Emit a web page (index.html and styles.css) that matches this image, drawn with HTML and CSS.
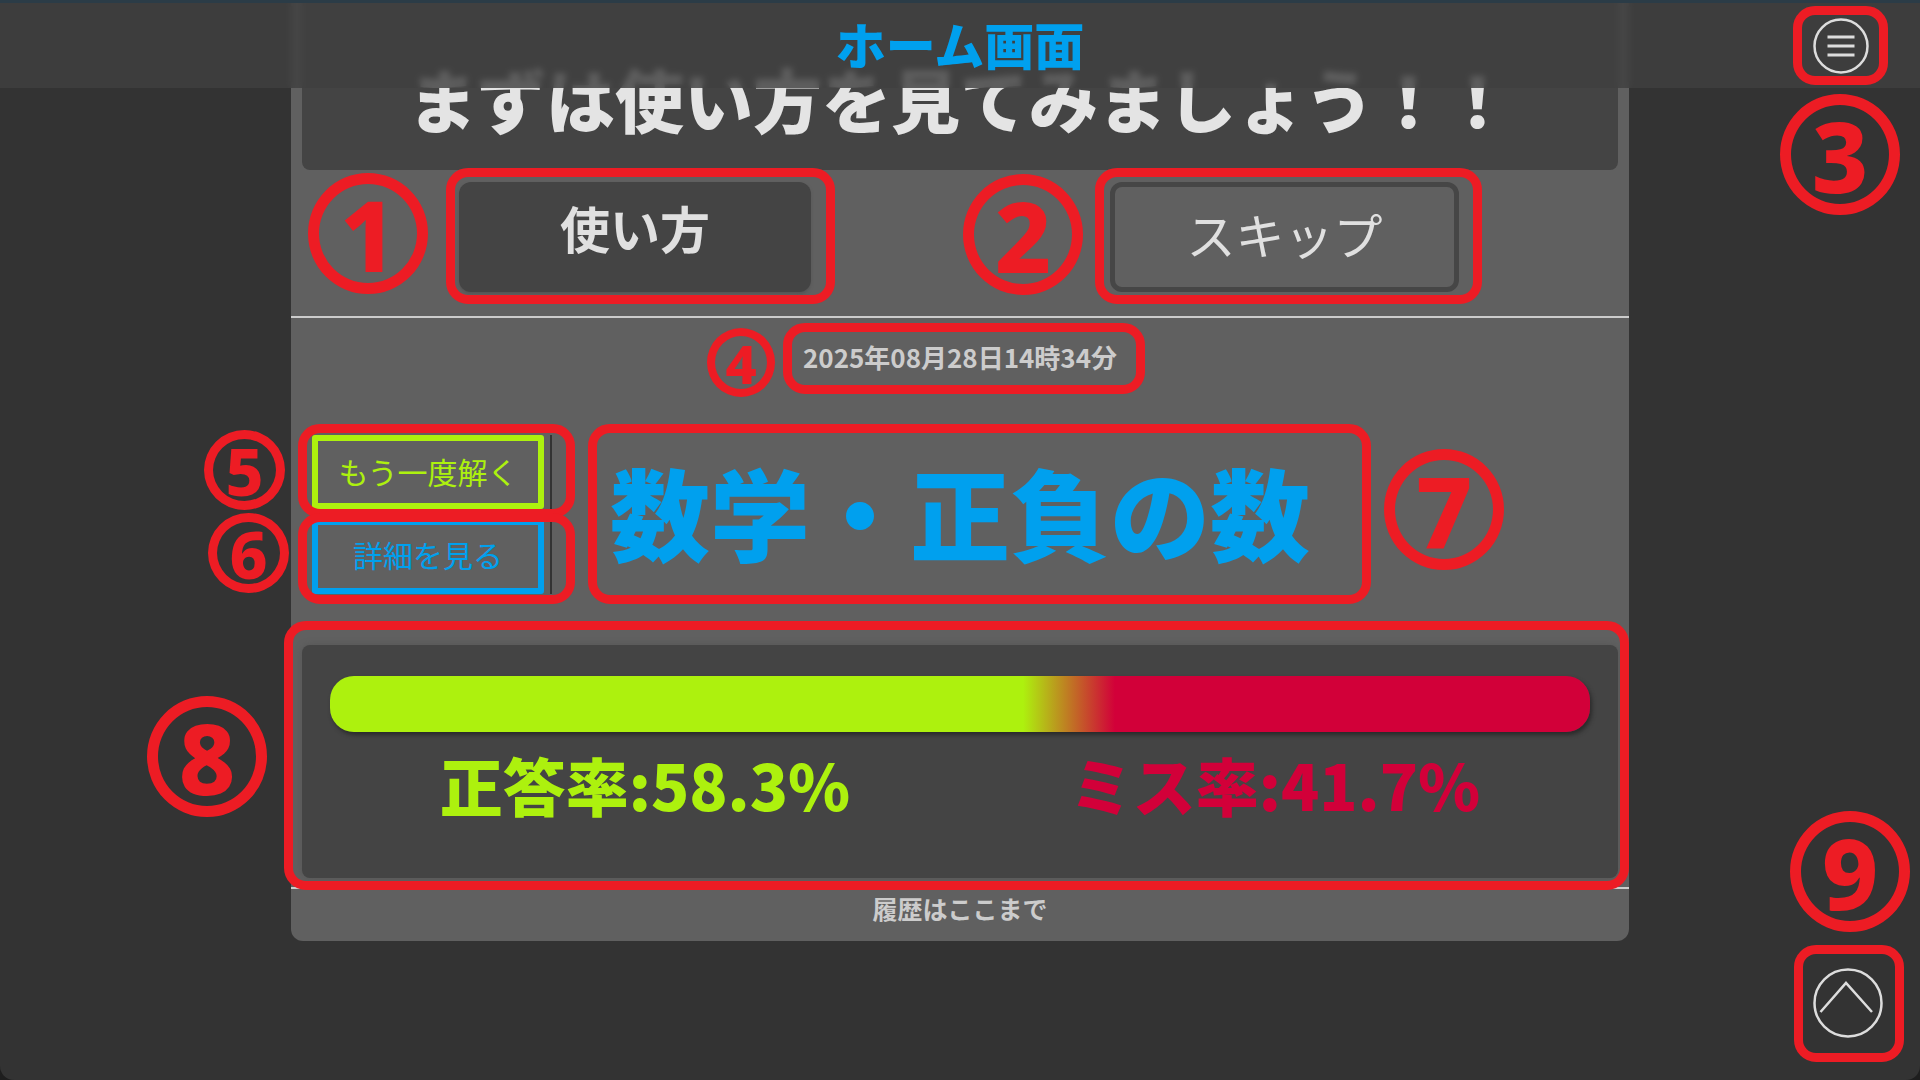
FILE: index.html
```html
<!DOCTYPE html>
<html lang="ja">
<head>
<meta charset="UTF-8">
<title>ホーム画面</title>
<link rel="stylesheet" href="styles.css">
</head>
<body>
<header class="top">
    <h1 class="top-title">ホーム画面</h1>
    <a class="menu-btn" href="javascript:;">
        <svg width="56" height="56" viewBox="0 0 56 56" fill="none" stroke="#ddd">
            <circle cx="28" cy="28" r="26.5" stroke-width="2.5"/>
            <path d="M14.5 19H41.5M14.5 28H41.5M14.5 37H41.5" stroke-width="3"/>
        </svg>
    </a>
</header>

<main class="card">
    <div class="intro">まずは使い方を見てみましょう！！</div>
    <div class="choice">
        <a class="btn btn-dark" href="javascript:;">使い方</a>
        <a class="btn btn-line" href="javascript:;">スキップ</a>
    </div>
    <div class="rule"></div>
    <div class="date">2025年08月28日14時34分</div>
    <div class="history">
        <div class="side">
            <a class="side-btn side-green" href="javascript:;">もう一度解く</a>
            <a class="side-btn side-blue" href="javascript:;">詳細を見る</a>
        </div>
        <div class="subject">数学・正負の数</div>
    </div>
    <div class="rate">
        <div class="rate-bar"></div>
        <div class="rate-text">
            <span class="rate-ok">正答率:58.3%</span>
            <span class="rate-ng">ミス率:41.7%</span>
        </div>
    </div>
    <div class="rule rule-end"></div>
    <div class="end">履歴はここまで</div>
</main>

<a class="up-btn" href="javascript:;">
    <svg width="70" height="70" viewBox="0 0 70 70" fill="none" stroke="#ddd" stroke-width="2.5">
        <circle cx="35" cy="35" r="33.5"/>
        <path d="M7.5 44L33 15L59 44"/>
    </svg>
</a>

<!-- 赤い注釈 -->
<div class="mark mark-1"></div>
<div class="mark mark-2"></div>
<div class="mark mark-3"></div>
<div class="mark mark-4"></div>
<div class="mark mark-5"></div>
<div class="mark mark-6"></div>
<div class="mark mark-7"></div>
<div class="mark mark-8"></div>
<div class="mark mark-9"></div>
<div class="num num-1">1</div>
<div class="num num-2">2</div>
<div class="num num-3">3</div>
<div class="num num-small num-4">4</div>
<div class="num num-mid num-5">5</div>
<div class="num num-mid num-6">6</div>
<div class="num num-7">7</div>
<div class="num num-8">8</div>
<div class="num num-9">9</div>
</body>
</html>
```

FILE: styles.css
```css
*{margin:0;padding:0;box-sizing:border-box;}
html{height:1080px;overflow:hidden;background:#1e1e1e;}
body{height:1080px;overflow:hidden;background:#333;border-radius:0 0 14px 14px;color:#e0e0e0;font-family:"Noto Sans CJK JP","Noto Sans",sans-serif;position:relative;}
a{text-decoration:none;color:inherit;}

.top{position:absolute;left:0;top:0;width:100%;height:88px;z-index:2;background:rgba(64,64,64,.82);border-top:3px solid #2b3c47;backdrop-filter:blur(3px);display:flex;justify-content:center;align-items:center;}
.top-title{font-size:50px;line-height:88px;margin-top:-5px;font-weight:900;color:#00a0ee;}
.menu-btn{position:absolute;right:51px;top:15px;display:block;height:56px;}

.card{width:1338px;height:941px;margin:0 auto;background:#606060;border-radius:0 0 12px 12px;}
.intro{height:170px;margin:0 11px;padding-top:54px;background:#444;border-radius:0 0 8px 8px;text-align:center;font-size:69px;line-height:88px;font-weight:900;color:#e4e4e4;}
.choice{display:flex;justify-content:center;gap:299px;padding:12px 2px 24px 0;}
.btn{display:block;width:352px;height:110px;border-radius:12px;text-align:center;font-size:50px;line-height:90px;}
.btn-dark{background:#444;font-weight:700;box-shadow:0 2px 3px #555;}
.btn-line{width:349px;border:5px solid #464646;font-size:49px;line-height:94px;}
.rule{height:2px;background:#ccc;}
.date{padding:19px 0 58px;text-align:center;font-size:26px;line-height:40px;font-weight:700;color:#ccc;}

.history{display:flex;align-items:center;padding-left:21px;height:159px;}
.side{width:240px;height:159px;border-right:2px solid #333;display:flex;flex-direction:column;gap:10px;}
.side-btn{display:block;width:232px;height:75px;border:6px solid;border-radius:3px;text-align:center;font-size:30px;line-height:60px;}
.side-green{color:#adf10e;height:74px;}
.side-blue{color:#00a0ee;line-height:58px;}
.subject{padding:0 0 8px 58px;font-size:100px;line-height:120px;font-weight:900;color:#00a0ee;}

.rate{height:233px;margin:51px 11px 0;padding:31px 28px 0;background:#444;border-radius:8px;box-shadow:0 0 6px #555;}
.rate-bar{height:56px;border-radius:24px;background:linear-gradient(90deg,#adf10e 55%,#d20039 62.3%);box-shadow:2px 3px 4px #2a2a2a;}
.rate-text{display:flex;margin-top:12px;font-size:63px;line-height:80px;font-weight:900;text-align:center;}
.rate-text span{flex:1;}
.rate-ok{color:#adf10e;}
.rate-ng{color:#d20039;}
.rule-end{margin-top:9px;}
.end{padding-top:2px;text-align:center;font-size:25px;line-height:34px;font-weight:700;color:#ccc;}

.up-btn{position:absolute;left:1813px;top:968px;display:block;height:70px;}

/* 注釈 */
.mark{position:absolute;z-index:3;border:9px solid #ed1c24;border-radius:22px;}
.mark-1{left:446px;top:168px;width:389px;height:136px;}
.mark-2{left:1095px;top:168px;width:387px;height:136px;}
.mark-3{left:1793px;top:6px;width:95px;height:79px;}
.mark-4{left:783px;top:323px;width:362px;height:71px;}
.mark-5{left:298px;top:424px;width:277px;height:94px;}
.mark-6{left:298px;top:513px;width:277px;height:91px;}
.mark-7{left:588px;top:424px;width:783px;height:180px;}
.mark-8{left:284px;top:621px;width:1345px;height:269px;}
.mark-9{left:1794px;top:945px;width:110px;height:117px;}

.num{position:absolute;z-index:3;width:120px;height:121px;border:11px solid #ed1c24;border-radius:50%;display:flex;justify-content:center;align-items:center;color:#ed1c24;font-family:"Noto Sans",sans-serif;font-weight:800;font-size:98px;line-height:1;}
.num-small{width:68px;height:69px;border-width:8px;font-size:54px;}
.num-mid{width:81px;height:80px;border-width:9px;font-size:66px;}
.num-1{left:308px;top:173px;}
.num-2{left:963px;top:174px;}
.num-3{left:1780px;top:94px;}
.num-4{left:707px;top:328px;}
.num-5{left:204px;top:430px;}
.num-6{left:208px;top:513px;}
.num-7{left:1384px;top:449px;}
.num-8{left:147px;top:696px;}
.num-9{left:1790px;top:811px;}
```
